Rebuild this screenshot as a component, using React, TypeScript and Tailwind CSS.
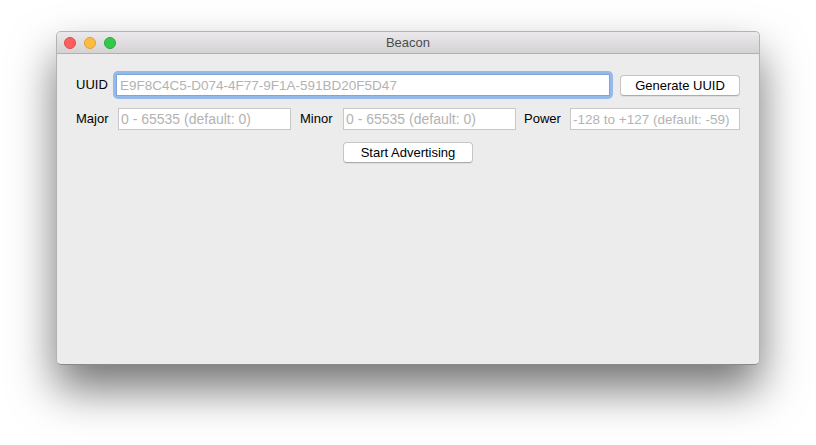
import React from "react";

const font = { fontFamily: '"Liberation Sans", Arial, sans-serif' };

function Field({ placeholder, className }: { placeholder: string; className: string }) {
  return (
    <input
      type="text"
      placeholder={placeholder}
      className={`h-[22px] bg-white border border-[#c8c8c8] px-[2px] text-black placeholder-[#b3b3b3] outline-none ${className}`}
    />
  );
}

function MacButton({ label, className }: { label: string; className: string }) {
  return (
    <button
      className={`h-[21px] rounded-[4px] bg-white border border-[#c5c5c5] border-b-[#acacac] text-[13px] text-black shadow-[0_1px_0_rgba(0,0,0,0.06)] ${className}`}
    >
      {label}
    </button>
  );
}

export default function App() {
  return (
    <div className="w-[816px] h-[445px] bg-white overflow-hidden pt-[31px] pl-[56px]" style={font}>
      <div className="w-[704px] h-[334px] rounded-[5px] bg-[#ececec] border border-[#b3b3b3] border-b-[#8a8a8a] shadow-[0_24px_45px_rgba(0,0,0,0.55)] flex flex-col overflow-hidden">
        <div className="h-[22px] shrink-0 relative flex items-center justify-center bg-gradient-to-b from-[#ebe9eb] to-[#d4d2d4] border-b border-[#b1b1b1]">
          <div className="absolute left-[7px] top-[5px] flex gap-[8px]">
            <span className="w-[12px] h-[12px] rounded-full bg-[#fc605c] border border-[#de4d48]" />
            <span className="w-[12px] h-[12px] rounded-full bg-[#fdbc40] border border-[#dea236]" />
            <span className="w-[12px] h-[12px] rounded-full bg-[#34c84a] border border-[#27aa35]" />
          </div>
          <span className="text-[13px] text-[#4c4c4c]">Beacon</span>
        </div>

        <div className="flex flex-col px-[19px]">
          <div className="flex items-center h-[26px] mt-[18px]">
            <span className="w-[40px] text-[13px] text-black">UUID</span>
            <div className="w-[494px] h-[22px] shadow-[0_0_0_3px_#95b9ea] rounded-[2px] flex">
              <input
                type="text"
                placeholder="E9F8C4C5-D074-4F77-9F1A-591BD20F5D47"
                className="w-full h-full bg-white border border-[#7fa6dc] px-[3px] text-[13.5px] placeholder-[#b3b3b3] outline-none"
              />
            </div>
            <MacButton label="Generate UUID" className="ml-[10px] w-[120px]" />
          </div>

          <div className="flex items-center h-[22px] mt-[10px]">
            <span className="w-[42px] text-[13px] text-black">Major</span>
            <Field placeholder="0 - 65535 (default: 0)" className="w-[173px] text-[14px]" />
            <span className="ml-[9px] w-[43px] text-[13px] text-black">Minor</span>
            <Field placeholder="0 - 65535 (default: 0)" className="w-[173px] text-[14px]" />
            <span className="ml-[8px] w-[46px] text-[13px] text-black">Power</span>
            <Field placeholder="-128 to +127 (default: -59)" className="w-[170px] text-[13.5px]" />
          </div>

          <div className="flex justify-center mt-[12px]">
            <MacButton label="Start Advertising" className="w-[130px]" />
          </div>
        </div>
      </div>
    </div>
  );
}
